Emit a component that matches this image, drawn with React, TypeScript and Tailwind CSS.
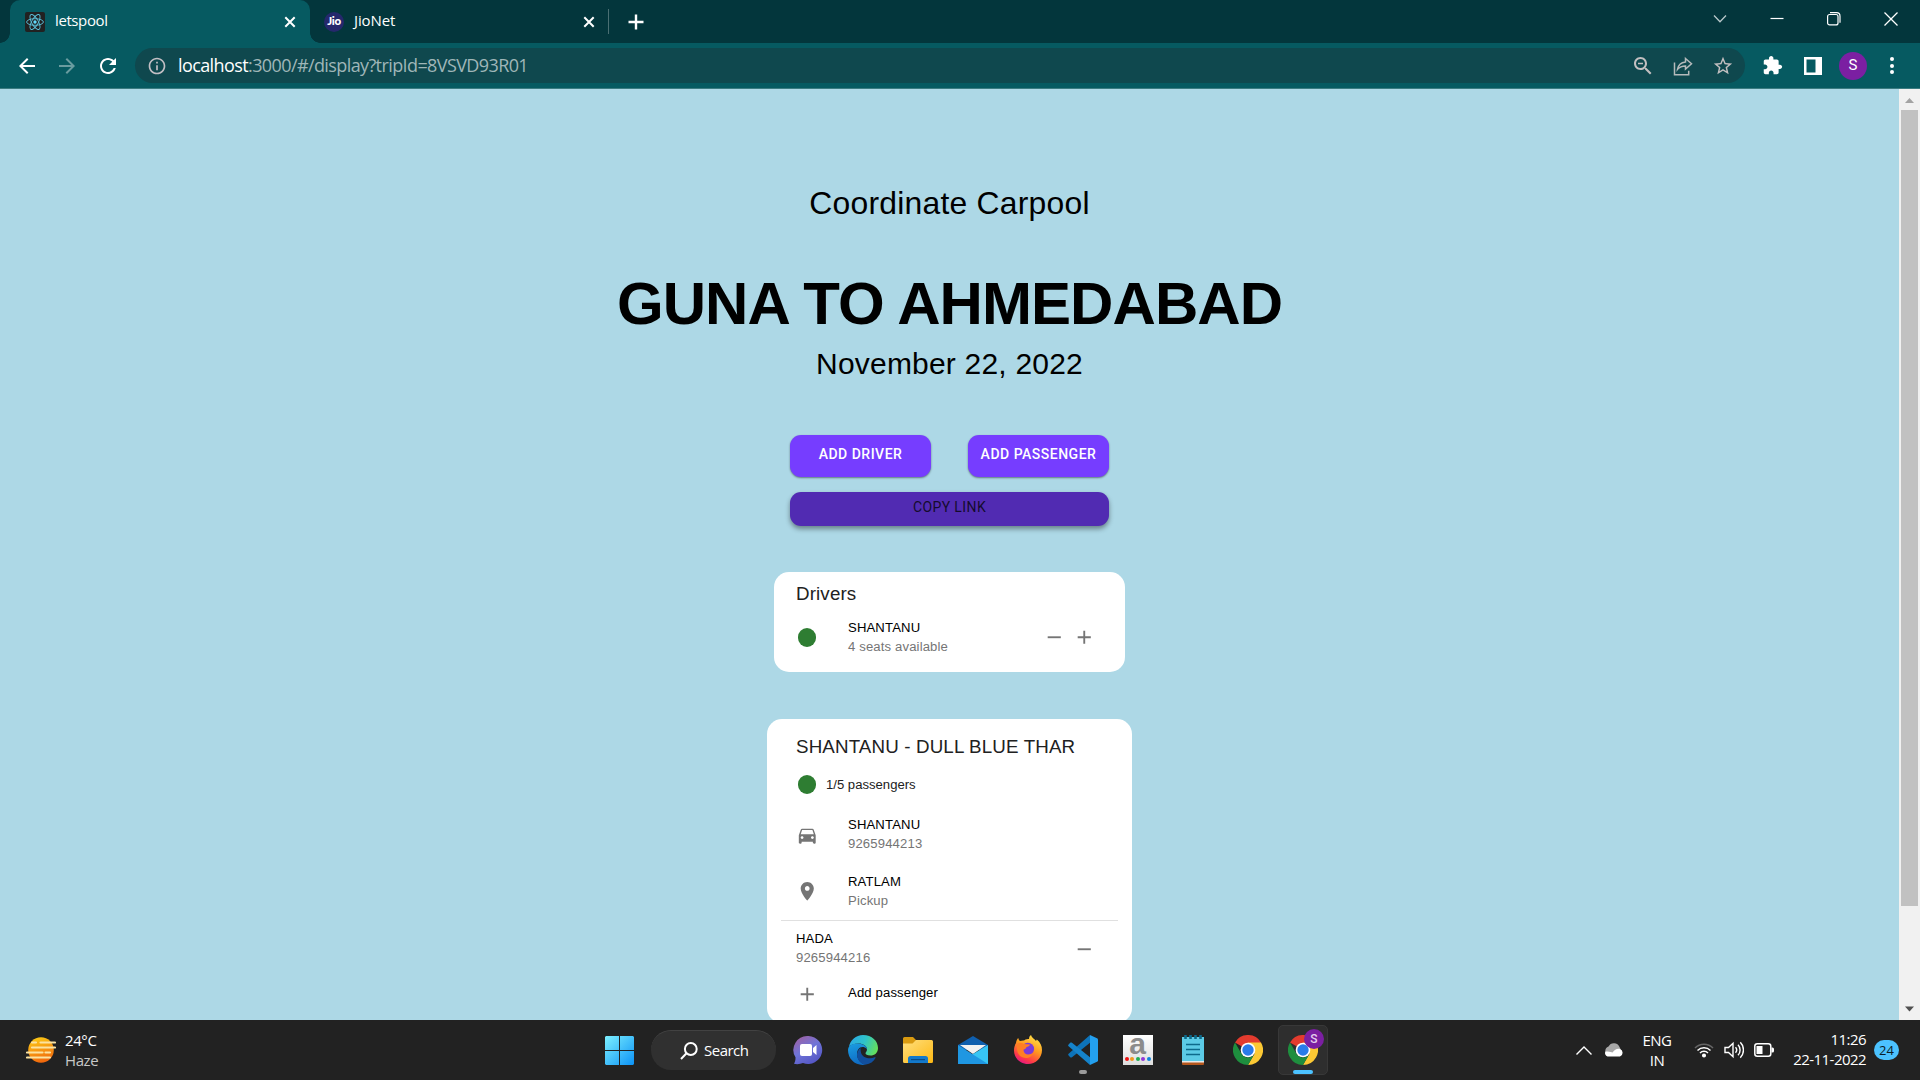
import type { ReactNode } from 'react';

const CAR =
  'M18.92 6.01C18.72 5.42 18.16 5 17.5 5h-11c-.66 0-1.21.42-1.42 1.01L3 12v8c0 .55.45 1 1 1h1c.55 0 1-.45 1-1v-1h12v1c0 .55.45 1 1 1h1c.55 0 1-.45 1-1v-8l-2.08-5.99zM6.5 16c-.83 0-1.5-.67-1.5-1.5S5.67 13 6.5 13s1.5.67 1.5 1.5S7.33 16 6.5 16zm11 0c-.83 0-1.5-.67-1.5-1.5s.67-1.5 1.5-1.5 1.5.67 1.5 1.5-.67 1.5-1.5 1.5zM5 11l1.5-4.5h11L19 11H5z';
const PLACE =
  'M12 2C8.13 2 5 5.13 5 9c0 5.25 7 13 7 13s7-7.75 7-13c0-3.87-3.13-7-7-7zm0 9.5c-1.38 0-2.5-1.12-2.5-2.5s1.12-2.5 2.5-2.5 2.5 1.12 2.5 2.5-1.12 2.5-2.5 2.5z';
const ADD = 'M19 13h-6v6h-2v-6H5v-2h6V5h2v6h6v2z';
const REMOVE = 'M19 13H5v-2h14v2z';
const BACK = 'M20 11H7.83l5.59-5.59L12 4l-8 8 8 8 1.41-1.41L7.83 13H20v-2z';
const RELOAD =
  'M17.65 6.35C16.2 4.9 14.21 4 12 4c-4.42 0-7.99 3.58-7.99 8s3.57 8 7.99 8c3.73 0 6.84-2.55 7.73-6h-2.08c-.82 2.33-3.04 4-5.65 4-3.31 0-6-2.69-6-6s2.69-6 6-6c1.66 0 3.14.69 4.22 1.78L13 11h7V4l-2.35 2.35z';
const INFO =
  'M11 7h2v2h-2zm0 4h2v6h-2zm1-9C6.48 2 2 6.48 2 12s4.48 10 10 10 10-4.48 10-10S17.52 2 12 2zm0 18c-4.41 0-8-3.59-8-8s3.59-8 8-8 8 3.59 8 8-3.59 8-8 8z';
const ZOOM_OUT =
  'M15.5 14h-.79l-.28-.27C15.41 12.59 16 11.11 16 9.5 16 5.91 13.09 3 9.5 3S3 5.91 3 9.5 5.91 16 9.5 16c1.61 0 3.09-.59 4.23-1.57l.27.28v.79l5 4.99L20.49 19l-4.99-5zm-6 0C7.01 14 5 11.99 5 9.5S7.01 5 9.5 5 14 7.01 14 9.5 11.99 14 9.5 14zM7 8.75h5v1.5H7z';
const STAR =
  'M22 9.24l-7.19-.62L12 2 9.19 8.63 2 9.24l5.46 4.73L5.82 21 12 17.27 18.18 21l-1.63-7.03L22 9.24zM12 15.4l-3.76 2.27 1-4.28-3.32-2.88 4.38-.38L12 6.1l1.71 4.04 4.38.38-3.32 2.88 1 4.28L12 15.4z';
const EXTENSION =
  'M20.5 11H19V7c0-1.1-.9-2-2-2h-4V3.5C13 2.12 11.88 1 10.5 1S8 2.12 8 3.5V5H4c-1.1 0-1.99.9-1.99 2v3.8H3.5c1.49 0 2.7 1.21 2.7 2.7s-1.21 2.7-2.7 2.7H2V20c0 1.1.9 2 2 2h3.8v-1.5c0-1.49 1.21-2.7 2.7-2.7 1.49 0 2.7 1.21 2.7 2.7V22H17c1.1 0 2-.9 2-2v-4h1.5c1.38 0 2.5-1.12 2.5-2.5S21.88 11 20.5 11z';

function Glyph({ d, className }: { d: string; className: string }) {
  return (
    <svg viewBox="0 0 24 24" fill="currentColor" className={`shrink-0 ${className}`}>
      <path d={d} />
    </svg>
  );
}

function CloseX() {
  return (
    <svg viewBox="0 0 12 12" className="size-3 shrink-0" fill="none" stroke="#fff" strokeWidth="2">
      <path d="M1.3 1.3l9.4 9.4M10.7 1.3l-9.4 9.4" />
    </svg>
  );
}

function ReactFavicon() {
  return (
    <svg viewBox="0 0 20 20" className="size-5 shrink-0">
      <rect width="20" height="20" rx="2" fill="#212121" />
      <g fill="none" stroke="#5cc3dc" strokeWidth="0.9">
        <ellipse cx="10" cy="10" rx="8.4" ry="3.3" />
        <ellipse cx="10" cy="10" rx="8.4" ry="3.3" transform="rotate(60 10 10)" />
        <ellipse cx="10" cy="10" rx="8.4" ry="3.3" transform="rotate(120 10 10)" />
      </g>
      <circle cx="10" cy="10" r="1.7" fill="#61dafb" />
    </svg>
  );
}

function TabStrip() {
  return (
    <div className="flex h-[43px] bg-[#03363c] pl-[10px] text-[15px] text-white">
      <div className="relative flex w-[300px] items-center rounded-t-[10px] bg-[#065a61] pr-[14px] pl-[15px]">
        <span className="absolute bottom-0 -left-[10px] size-[10px] bg-[radial-gradient(circle_at_0_0,#03363c_9.5px,#065a61_10px)]" />
        <span className="absolute -right-[10px] bottom-0 size-[10px] bg-[radial-gradient(circle_at_100%_0,#03363c_9.5px,#065a61_10px)]" />
        <ReactFavicon />
        <span className="ml-[10px] flex-1 pb-[3px] leading-5 tracking-[-0.4px]">letspool</span>
        <CloseX />
      </div>
      <div className="flex w-[298px] items-center pr-[13px] pl-[14px]">
        <span className="flex size-5 items-center justify-center rounded-full bg-[#25286c] pb-px font-['Lato'] text-[11.5px] font-black tracking-[-0.3px]">
          Jio
        </span>
        <span className="ml-[10px] flex-1 pb-[3px] leading-5 tracking-[-0.1px]">JioNet</span>
        <CloseX />
      </div>
      <span className="mt-[9px] h-[25px] w-px bg-[#4a6f73]" />
      <div className="flex flex-1 items-center pl-[19px]">
        <svg viewBox="0 0 16 16" className="size-4" stroke="#fff" strokeWidth="2.4">
          <path d="M8 0.5v15M0.5 8h15" />
        </svg>
      </div>
      <div className="flex items-start pt-3 pr-[22px]">
        <svg viewBox="0 0 14 14" className="size-[14px]" fill="none" stroke="#b9c8ca" strokeWidth="1.3">
          <path d="M1 3.5l6 6.3 6-6.3" />
        </svg>
        <svg viewBox="0 0 14 14" className="ml-[43px] size-[14px]" stroke="#fff" strokeWidth="1.2">
          <path d="M0.500 6.500h13" />
        </svg>
        <svg viewBox="0 0 14 14" className="ml-[43px] size-[14px]" fill="none" stroke="#fff" strokeWidth="1.2">
          <rect x="0.600" y="2.500" width="10.400" height="10.400" rx="2" />
          <path d="M3 0.700h6.500a3.500 3.500 0 0 1 3.500 3.500v6.500" />
        </svg>
        <svg viewBox="0 0 14 14" className="ml-[43px] size-[14px]" stroke="#fff" strokeWidth="1.3">
          <path d="M0.500 0.500l13 13M13.500 0.500l-13 13" />
        </svg>
      </div>
    </div>
  );
}

function Toolbar() {
  return (
    <div className="flex h-[46px] items-center border-b border-[#3b7c81] bg-[#065a61] pl-[15px]">
      <Glyph d={BACK} className="size-6 text-white" />
      <Glyph d={BACK} className="ml-4 size-6 rotate-180 text-[#6a9ca0]" />
      <Glyph d={RELOAD} className="ml-[17px] size-6 text-white" />
      <div className="ml-[15px] flex h-[35px] w-[1610px] items-center rounded-full bg-[#0f484e] pr-[11px] pl-3">
        <Glyph d={INFO} className="size-5 text-[#c3bfc4]" />
        <div className="ml-[11px] flex-1 pb-px text-[18px] leading-6 tracking-[-0.6px] text-[#9fb6b8]">
          <span className="text-white">localhost</span>:3000/#/display?tripId=8VSVD93R01
        </div>
        <Glyph d={ZOOM_OUT} className="size-6 text-[#c3bfc0]" />
        <svg viewBox="0 0 24 24" className="ml-[16px] size-6" fill="none" stroke="#b5babb" strokeWidth="1.5">
          <path d="M3.500 8.500v12.200h14.200v-4" />
          <path d="M14.500 4.500l6 5.300-6 5.300v-3.200c-3.600 0-6 1-8 3.500.6-4 3.200-7 8-7.500z" />
        </svg>
        <Glyph d={STAR} className="ml-[17px] size-[22px] text-[#c3bfc0]" />
      </div>
      <Glyph d={EXTENSION} className="ml-[17px] size-[21px] text-white" />
      <svg viewBox="0 0 18 18" className="ml-[21px] size-[18px]">
        <path d="M0 0h18v18H0zM2.500 2.500v13h9v-13z" fill="#fff" fillRule="evenodd" />
      </svg>
      <span className="ml-[17px] flex size-7 items-center justify-center rounded-full bg-[#7b1fa2] font-['Roboto'] text-[15px] text-white">
        S
      </span>
      <span className="ml-[23px] flex flex-col gap-[2.5px]">
        <i className="size-[4px] rounded-full bg-white" />
        <i className="size-[4px] rounded-full bg-white" />
        <i className="size-[4px] rounded-full bg-white" />
      </span>
    </div>
  );
}

function Row({ icon, title, sub, actions, className = '' }: { icon?: ReactNode; title: string; sub?: string; actions?: ReactNode; className?: string }) {
  return (
    <div className={`flex items-center ${className}`}>
      {icon && <span className="mr-[30px] flex w-[22px] justify-center text-[#757575]">{icon}</span>}
      <div className="flex-1 text-[13.125px] leading-[19px] tracking-[0.14px]">
        <div className="text-black">{title}</div>
        {sub && <div className="text-[#757575]">{sub}</div>}
      </div>
      <span className="flex gap-[7px] text-[#757575]">{actions}</span>
    </div>
  );
}

const Dot = () => <i className="h-[19px] w-[18px] shrink-0 rounded-full bg-[#2e7d32]" />;

function Page() {
  return (
    <main className="flex h-[931px] overflow-hidden bg-[#add8e6] font-['Liberation_Sans',sans-serif] text-black">
      <div className="flex w-[1899px] flex-col items-center pt-[94px]">
        <h2 className="text-[31.875px] leading-10 tracking-[0.00735em]">Coordinate Carpool</h2>
        <h1 className="mt-[46px] text-[60px] leading-[70px] font-bold tracking-[-0.01562em]">GUNA TO AHMEDABAD</h1>
        <p className="mt-[5px] text-[30px] leading-10 tracking-[0.2px]">November 22, 2022</p>
        <div className="mt-[51px] flex gap-[37px] font-['Roboto',sans-serif] text-[14px] leading-5 font-medium tracking-[0.5px] text-white">
          <button className="flex h-[42px] w-[141px] justify-center rounded-[11px] bg-[#763dff] pt-[9px] shadow-[0_1px_2px_rgba(0,0,0,0.45)]">ADD DRIVER</button>
          <button className="flex h-[42px] w-[141px] justify-center rounded-[11px] bg-[#763dff] pt-[9px] whitespace-nowrap shadow-[0_1px_2px_rgba(0,0,0,0.45)]">ADD PASSENGER</button>
        </div>
        <button className="mt-[15px] flex h-[34px] w-[319px] shrink-0 justify-center rounded-[11px] bg-[#512bb2] pt-[5px] font-['Roboto',sans-serif] text-[14px] leading-5 tracking-[0.4px] text-[#150b2e] shadow-[0_3px_5px_rgba(0,0,0,0.4)]">
          COPY LINK
        </button>

        <section className="mt-[46px] h-[100px] w-[351px] shrink-0 rounded-[15px] bg-white pt-[10px] pr-[30px] pl-[22px]">
          <h3 className="text-[18.75px] leading-6 tracking-[0.0075em] text-[#212121]">Drivers</h3>
          <Row
            className="mt-3"
            icon={<Dot />}
            title="SHANTANU"
            sub="4 seats available"
            actions={
              <>
                <Glyph d={REMOVE} className="size-[22.5px]" />
                <Glyph d={ADD} className="size-[22.5px]" />
              </>
            }
          />
        </section>

        <section className="mt-[47px] h-[304px] w-[365px] shrink-0 rounded-[15px] bg-white px-[14px] pt-4">
          <div className="pr-[22px] pl-[15px]">
            <h3 className="text-[18.75px] leading-6 tracking-[0.0075em] text-[#212121]">SHANTANU - DULL BLUE THAR</h3>
            <div className="mt-4 flex items-center pl-[2px]">
              <Dot />
              <span className="ml-[10px] text-[13.125px] leading-[19px] text-[#212121]">1/5 passengers</span>
            </div>
            <Row className="mt-[21px]" icon={<Glyph d={CAR} className="mt-[2px] size-[22.5px]" />} title="SHANTANU" sub="9265944213" />
            <Row className="mt-[19px]" icon={<Glyph d={PLACE} className="size-[22.5px]" />} title="RATLAM" sub="Pickup" />
          </div>
          <div className="mt-[10px] h-px bg-[#e0e0e0]" />
          <div className="pr-[23px] pl-[15px]">
            <Row className="mt-2" title="HADA" sub="9265944216" actions={<Glyph d={REMOVE} className="mt-[2px] size-[22.5px]" />} />
            <Row className="mt-[12px]" icon={<Glyph d={ADD} className="mt-[4px] size-[22.5px]" />} title="Add passenger" />
          </div>
        </section>
      </div>
      <div className="flex flex-1 flex-col items-center bg-[#f1f1f1]">
        <svg viewBox="0 0 21 21" className="size-[21px]">
          <path d="M6 14l4.500-5 4.500 5z" fill="#a3a3a3" />
        </svg>
        <div className="h-[796px] w-[17px] bg-[#c1c1c1]" />
        <svg viewBox="0 0 21 21" className="mt-auto size-[21px]">
          <path d="M6 7.500l4.500 5 4.500-5z" fill="#505050" />
        </svg>
      </div>
    </main>
  );
}

function ChromeLogo() {
  return (
    <svg viewBox="0 0 30 30" className="size-[30px]">
      <path d="M15 15L2 7.500A15 15 0 0 1 28 7.500z" fill="#e33b2e" />
      <path d="M15 7.500H28A15 15 0 0 1 15 30l6.500-11.250z" fill="#fcc934" />
      <path d="M2 7.500L8.500 18.750A7.500 7.500 0 0 0 21.500 18.750L15 30A15 15 0 0 1 2 7.500z" fill="#1e8e3e" />
      <circle cx="15" cy="15" r="7.300" fill="#fff" />
      <circle cx="15" cy="15" r="5.700" fill="#2a7bea" />
    </svg>
  );
}

function TaskIcon({ children }: { children: ReactNode }) {
  return <span className="relative flex h-[50px] w-[55px] items-center justify-center">{children}</span>;
}

function TaskbarApps() {
  return (
    <div className="flex items-center">
      <svg viewBox="0 0 29 29" className="size-[29px]">
        <defs>
          <linearGradient id="win" gradientUnits="userSpaceOnUse" x1="0" y1="0" x2="29" y2="29">
            <stop offset="0" stopColor="#7df0ff" />
            <stop offset="1" stopColor="#0c92f5" />
          </linearGradient>
        </defs>
        <path d="M1 0h13v14H0V1zM15 0h13l1 1v13H15zM0 15h14v14H1l-1-1zM15 15h14v13l-1 1H15z" fill="url(#win)" />
      </svg>
      <div className="mr-[4px] ml-[17px] flex h-10 w-[125px] items-center rounded-full border-t border-[#424242] bg-[#303030] pl-[29px] text-[15px] tracking-[-0.5px] text-white">
        <svg viewBox="0 0 18 18" className="size-[18px]" fill="none" stroke="#fff" strokeWidth="2">
          <circle cx="10.800" cy="7" r="5.900" />
          <path d="M6.500 11.300L1 17" />
        </svg>
        <span className="ml-[6px]">Search</span>
      </div>
      <TaskIcon>
        <svg viewBox="0 0 30 30" className="size-[30px]">
          <defs>
            <linearGradient id="chat" x1="0.100" y1="0" x2="0.700" y2="1">
              <stop offset="0" stopColor="#a25f9f" />
              <stop offset="0.500" stopColor="#6f74d8" />
              <stop offset="1" stopColor="#5355c4" />
            </linearGradient>
          </defs>
          <path d="M15.500 1a14 14 0 1 1-5.500 27c-2.500 1-5.500 1.500-9 .8 1-1.800 1.600-3.500 1.500-6.500A14 14 0 0 1 15.500 1z" fill="url(#chat)" />
          <rect x="7" y="9" width="12" height="12" rx="2" fill="#fff" />
          <path d="M20 13l3.500-3v10L20 17z" fill="#fff" />
        </svg>
      </TaskIcon>
      <TaskIcon>
        <svg viewBox="0 0 30 30" className="size-[30px]">
          <defs>
            <linearGradient id="edgeA" x1="0" y1="0.300" x2="1" y2="0.600">
              <stop offset="0" stopColor="#2aa9e6" />
              <stop offset="0.500" stopColor="#2fc3c9" />
              <stop offset="1" stopColor="#66e05a" />
            </linearGradient>
            <linearGradient id="edgeB" x1="0" y1="0" x2="0.300" y2="1">
              <stop offset="0" stopColor="#1b9ee2" />
              <stop offset="1" stopColor="#0f6cc4" />
            </linearGradient>
          </defs>
          <path d="M1 12C2 5 8 0 15 0c9 0 15 6 15 13 0 5-3.500 7.500-7.500 7.500-3.500 0-5-1.300-5-2.200 0-.9 1.500-1.500 1.500-4C19 11 15 8.500 10.500 8.500 6 8.500 2.500 10 1 12z" fill="url(#edgeA)" />
          <path d="M0 15C0 10.500 4.500 8.500 9.500 8.500c5 0 9.500 2.500 9.500 6 0 0-1-2.500-4.500-2.500-3.500 0-5.500 3.500-5.500 7 0 5 4 10 9 10.600C8 31.500 0 24.500 0 15z" fill="url(#edgeB)" />
          <path d="M12.500 13c-2 1.500-3.500 4-3.500 6.500C9 25 13.500 30 18 29.600c4-.6 7.500-3 9.500-6.600.3-.6-.2-1-.8-.7-5 2.400-12 .6-13.600-4.300-.6-2-.4-3.600-.6-5z" fill="#114f9e" />
        </svg>
      </TaskIcon>
      <TaskIcon>
        <svg viewBox="0 0 30 30" className="size-[30px]">
          <defs>
            <linearGradient id="folder" x1="0" y1="0" x2="1" y2="1">
              <stop offset="0" stopColor="#ffdf7e" />
              <stop offset="1" stopColor="#fdb813" />
            </linearGradient>
          </defs>
          <path d="M0 3.500A1.500 1.500 0 0 1 1.500 2H10l3 3v6H0z" fill="#d99a10" />
          <path d="M0 8.500h9.500L13 5h15.500A1.500 1.500 0 0 1 30 6.500v20a1.500 1.500 0 0 1-1.500 1.500h-27A1.500 1.500 0 0 1 0 26.500z" fill="url(#folder)" />
          <path d="M5 28v-4.500A2.500 2.500 0 0 1 7.500 21h15a2.500 2.500 0 0 1 2.500 2.500V28z" fill="#1379cb" />
          <rect x="8" y="24" width="14" height="1.200" fill="#0a4c86" />
        </svg>
      </TaskIcon>
      <TaskIcon>
        <svg viewBox="0 0 30 30" className="size-[30px]">
          <path d="M0 10L15 1l15 9v5H0z" fill="#0f5fae" />
          <path d="M2 10h26l-13 9z" fill="#f1f1f1" />
          <path d="M30 10v19H2l13-10z" fill="#37c5f4" />
          <path d="M0 10l30 19H0z" fill="#1f97e2" />
        </svg>
      </TaskIcon>
      <TaskIcon>
        <svg viewBox="0 0 30 30" className="size-[30px]">
          <defs>
            <linearGradient id="fox" x1="0.800" y1="0" x2="0.300" y2="1">
              <stop offset="0" stopColor="#ffe84a" />
              <stop offset="0.450" stopColor="#ff9a1f" />
              <stop offset="0.800" stopColor="#ff3b47" />
              <stop offset="1" stopColor="#e31587" />
            </linearGradient>
          </defs>
          <path d="M3 8c.3-2.500 1.200-4 2.300-5 .2 1.500.8 2.300 1.700 3 1.300-.5 2.500-.7 4-.6C13 4 15 4 16 4c0-2 .8-3.300 2-4 .5 2.500 3.500 4 5 6l.8-1.500C27.500 7.500 29 11 29 15c0 8-6.300 14-14 14S1 23 1 15.500C1 12.500 1.800 10 3 8z" fill="url(#fox)" />
          <circle cx="14.800" cy="14" r="6.300" fill="#7a3bd9" />
          <path d="M4 9c2-1.500 5-1.500 7 0l6 .5c0 1.600-2.500 2.200-3.500 2.500-.5 1.600-1.500 2-3 2.800 0 3 2 4.700 4.700 4.700 2 0 3.500-.8 5-2-1 4-4 5.500-7.200 5.500C8 23 4 19 4 14z" fill="#ff7e25" />
        </svg>
      </TaskIcon>
      <TaskIcon>
        <svg viewBox="0 0 30 30" className="size-[30px]">
          <path d="M22 0v7.800L4 22.200c-.6.500-1.200.5-1.800 0L.6 20.600c-.6-.6-.6-1.300 0-1.800z" fill="#0d73b9" />
          <path d="M22 30v-7.800L4 7.800c-.6-.5-1.200-.5-1.800 0L.6 9.400c-.6.6-.6 1.300 0 1.800z" fill="#1583cb" />
          <path d="M22 0l7 3.200c.6.300 1 .8 1 1.500v20.600c0 .7-.4 1.200-1 1.500L22 30z" fill="#23a0ef" />
        </svg>
        <i className="absolute bottom-px h-1 w-2 rounded-full bg-[#9b9b9b]" />
      </TaskIcon>
      <TaskIcon>
        <span className="flex size-[30px] flex-col items-center justify-between bg-linear-to-b from-white to-[#dedede] pb-[4px]">
          <b className="h-[19px] font-['Liberation_Sans'] text-[30px] leading-[17px] text-[#8c8c8c]">a</b>
          <span className="flex gap-[1.5px]">
            <i className="size-1 rounded-full bg-[#ee1111]" />
            <i className="size-1 rounded-full bg-[#f29a1f]" />
            <i className="size-1 rounded-full bg-[#1fae55]" />
            <i className="size-1 rounded-full bg-[#9138d8]" />
            <i className="size-1 rounded-full bg-[#0c84dd]" />
          </span>
        </span>
      </TaskIcon>
      <TaskIcon>
        <svg viewBox="0 0 22 30" className="h-[30px] w-[22px]">
          <rect y="24" width="22" height="6" rx="1" fill="#b4561c" />
          <rect y="22" width="22" height="5.500" fill="#e8e8e8" />
          <rect y="2" width="22" height="24" fill="#5ccbe6" />
          <path d="M4 9.500h14M4 14.500h14M4 19.500h14" stroke="#0d6a8b" strokeWidth="1.600" />
          <path d="M3.500 0v4M8.500 0v4M13.500 0v4M18.500 0v4" stroke="#0d6a8b" strokeWidth="2.600" />
        </svg>
      </TaskIcon>
      <TaskIcon>
        <ChromeLogo />
      </TaskIcon>
      <TaskIcon>
        <span className="flex size-[50px] items-center justify-center rounded-[5px] border border-[#383838] bg-[#2e2e2e]">
          <ChromeLogo />
        </span>
        <span className="absolute top-[4px] right-[6px] flex size-5 items-center justify-center rounded-full bg-[#7b1fa2] font-['Roboto'] text-[12px] font-medium text-[#e3cdec]">
          S
        </span>
        <i className="absolute bottom-px h-1 w-5 rounded-full bg-[#4cc2ff]" />
      </TaskIcon>
    </div>
  );
}

function Tray() {
  return (
    <div className="flex items-center text-[15px] leading-5 text-white">
      <svg viewBox="0 0 16 9" className="h-[9px] w-4" fill="none" stroke="#fff" strokeWidth="1.400">
        <path d="M0.500 8.500L8 1l7.500 7.500" />
      </svg>
      <svg viewBox="0 0 20 14" className="ml-[12px] h-[14px] w-5">
        <path d="M5 13a5 5 0 0 1-.5-9.500A6 6 0 0 1 15.500 4l2 4z" fill="#a8a8a8" />
        <path d="M3.500 13.500A3.500 3.500 0 0 1 1.500 8.500c3 0 4.500 0 7 1 2-3 5-4.500 7.500-3.500A4 4 0 0 1 16 13.500z" fill="#fff" />
      </svg>
      <div className="ml-[17px] w-8 text-center tracking-[-0.5px]">
        <div>ENG</div>
        <div>IN</div>
      </div>
      <svg viewBox="0 0 20 16" className="ml-[21px] h-4 w-5" fill="none" stroke="#fff" strokeWidth="1.500">
        <path d="M1 6a12.700 12.700 0 0 1 18 0" stroke="#666" />
        <path d="M3.500 8.500a9.200 9.200 0 0 1 13 0M6 11a5.600 5.600 0 0 1 8 0" />
        <circle cx="10" cy="13.500" r="1.300" fill="#fff" />
      </svg>
      <svg viewBox="0 0 20 18" className="ml-[10px] h-[18px] w-5" fill="none" stroke="#fff" strokeWidth="1.400">
        <path d="M1 6.500h3.500L9 2.300v13.400L4.500 11.500H1z" />
        <path d="M11.500 6.300a4 4 0 0 1 0 5.400M14 3.800a7.500 7.500 0 0 1 0 10.400M16.300 1.300a11 11 0 0 1 0 15.400" />
      </svg>
      <svg viewBox="0 0 20 14" className="ml-[10px] h-[14px] w-5">
        <rect x="0.800" y="0.800" width="16" height="12.400" rx="2.500" fill="none" stroke="#fff" strokeWidth="1.500" />
        <rect x="2.500" y="3" width="6" height="8" fill="#fff" />
        <path d="M17.500 4.500h1a1.500 1.500 0 0 1 1.500 1.500v2a1.500 1.500 0 0 1-1.500 1.500h-1z" fill="#fff" />
      </svg>
      <div className="ml-[20px] w-[72px] pb-[2px] text-right tracking-[-0.55px] whitespace-nowrap">
        <div>11:26</div>
        <div className="flex justify-end">22-11-2022</div>
      </div>
      <span className="ml-2 flex h-5 w-[25px] items-center justify-center rounded-full bg-[#4cc2ff] text-[13px] text-[#0b1d28]">24</span>
    </div>
  );
}

function Weather() {
  return (
    <div className="flex items-center pl-[26px] text-[15px] leading-5 text-white">
      <svg viewBox="0 0 30 26" className="h-[26px] w-[30px]">
        <defs>
          <linearGradient id="sun" x1="0.300" y1="0" x2="0.600" y2="1">
            <stop offset="0" stopColor="#fcc916" />
            <stop offset="1" stopColor="#f0640c" />
          </linearGradient>
        </defs>
        <circle cx="15" cy="13" r="12.800" fill="url(#sun)" />
        <path d="M6 5.500h4M14.500 5.500h14.500M6 10.500h23M1 15.500h15.500M19.500 15.500h4.500M1 20.500h23" stroke="#fbe2a0" strokeWidth="2.200" strokeLinecap="round" />
      </svg>
      <div className="ml-[9px] tracking-[-0.4px]">
        <div>24°C</div>
        <div className="text-[#c8c8c8]">Haze</div>
      </div>
    </div>
  );
}

export default function App() {
  return (
    <div className="h-[1080px] w-[1920px] overflow-hidden font-['Open_Sans','Noto_Sans',sans-serif]">
      <TabStrip />
      <Toolbar />
      <Page />
      <footer className="flex h-[60px] items-center bg-[#222222]">
        <div className="w-[605px]">
          <Weather />
        </div>
        <TaskbarApps />
        <div className="mr-[21px] ml-auto">
          <Tray />
        </div>
      </footer>
    </div>
  );
}
